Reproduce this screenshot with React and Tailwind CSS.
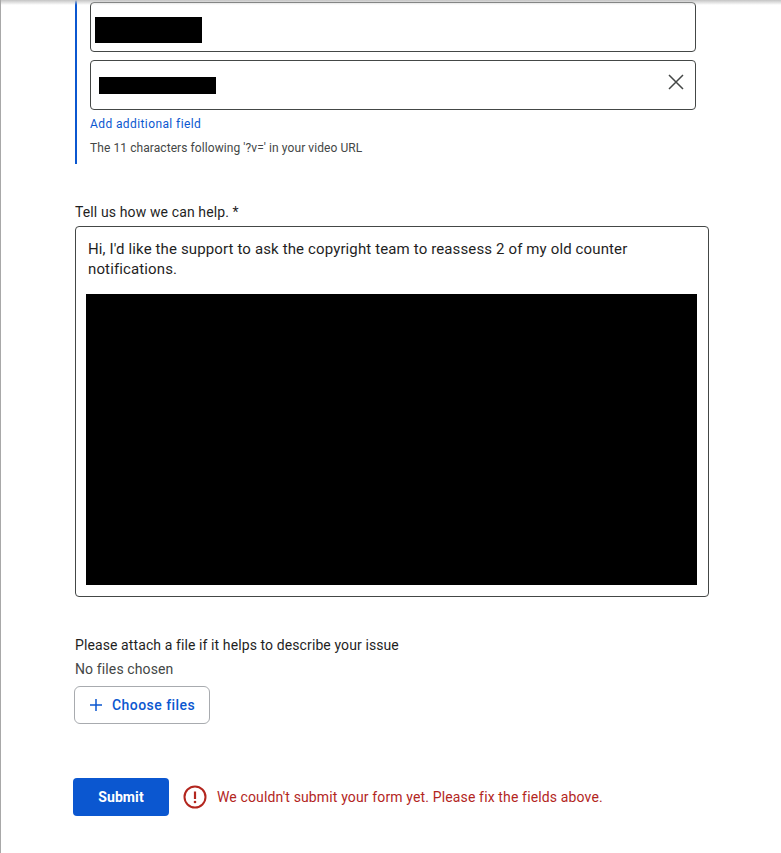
export default function App() {
  return (
    <div className="relative h-[853px] overflow-hidden bg-white border-l border-[#a8a8a8] font-['Roboto',sans-serif]">
      <div className="absolute top-0 left-0 right-0 h-[5px] bg-gradient-to-b from-[#c4c4c4] to-white/0" />

      <div className="ml-[74px]">
        <div className="h-[164px] w-[621px] border-l-2 border-[#0b57d0] pl-[13px] pt-[2px]">
          <div className="h-[50px] border border-[#444746] rounded pl-[4px] pt-[14px]">
            <div className="w-[107px] h-[26px] bg-black" />
          </div>
          <div className="mt-2 h-[50px] border border-[#444746] rounded flex items-center justify-between pl-[8px] pr-[11px]">
            <div className="w-[117px] h-[17px] bg-black" />
            <svg className="-mt-[7px]" width="16" height="16" viewBox="0 0 16 16" fill="none" stroke="#444746" strokeWidth="1.5">
              <path d="M1 1l14 14M15 1L1 15" />
            </svg>
          </div>
          <div className="mt-[6px] text-xs leading-4 tracking-[0.4px] text-[#0b57d0]">Add additional field</div>
          <div className="mt-2 text-xs leading-4 tracking-[0.08px] text-[#444746]">The 11 characters following '?v=' in your video URL</div>
        </div>

        <div className="mt-[38px] text-sm leading-[20px] tracking-[0.12px] text-[#1f1f1f]">Tell us how we can help. *</div>
        <div className="mt-[4px] w-[634px] h-[371px] border border-[#444746] rounded pt-[12px] pl-[10px]">
          <p className="w-[600px] pl-[2px] text-[15px] leading-[20px] tracking-[0.13px] text-[#1f1f1f]">
            Hi, I'd like the support to ask the copyright team to reassess 2 of my old counter notifications.
          </p>
          <div className="mt-[15px] w-[611px] h-[291px] bg-black" />
        </div>

        <div className="mt-[38px] text-sm leading-[20px] tracking-[0.1px] text-[#1f1f1f]">Please attach a file if it helps to describe your issue</div>
        <div className="mt-[4px] text-sm leading-[20px] tracking-[0.12px] text-[#444746]">No files chosen</div>
        <button className="mt-[7px] -ml-px w-[136px] h-[38px] border border-[#a8abaf] rounded-md flex items-center pl-[14px] pb-[1px] gap-[9px] text-sm font-medium tracking-[0.45px] text-[#0b57d0]">
          <svg className="mt-px" width="14" height="14" viewBox="0 0 14 14" fill="none" stroke="#0b57d0" strokeWidth="1.5">
            <path d="M7 1v12M1 7h12" />
          </svg>
          Choose files
        </button>

        <div className="mt-[54px] -ml-[2px] flex items-center">
          <button className="w-[96px] h-[38px] bg-[#0b57d0] rounded text-sm font-bold tracking-[0.1px] text-white">Submit</button>
          <svg className="ml-[14px]" width="24" height="24" viewBox="0 0 24 24" fill="none">
            <circle cx="12" cy="12" r="10.5" stroke="#b3261e" strokeWidth="2" />
            <path d="M12 6.5v7.5" stroke="#b3261e" strokeWidth="2.2" />
            <circle cx="12" cy="17" r="1.3" fill="#b3261e" />
          </svg>
          <span className="ml-[10px] text-sm tracking-[0.14px] text-[#b3261e]">We couldn't submit your form yet. Please fix the fields above.</span>
        </div>
      </div>
    </div>
  )
}
